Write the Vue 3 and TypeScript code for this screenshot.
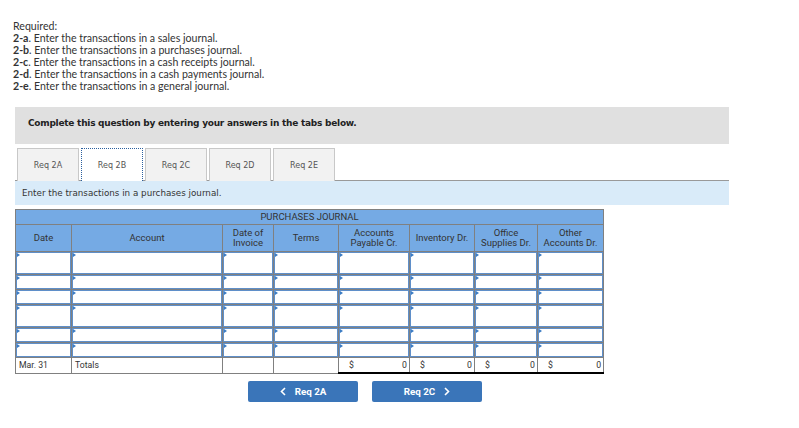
<template>
  <div class="page">
    <div class="required">
      <div>Required:</div>
      <div v-for="item in requirements" :key="item.id">
        <b>{{ item.id }}</b>. {{ item.text }}
      </div>
    </div>

    <div class="banner">Complete this question by entering your answers in the tabs below.</div>

    <div class="tabs">
      <div v-for="tab in tabs" :key="tab" class="tab" :class="{ active: tab === activeTab }">{{ tab }}</div>
    </div>

    <div class="prompt">Enter the transactions in a purchases journal.</div>

    <table class="journal">
      <colgroup>
        <col v-for="(w, i) in colWidths" :key="i" :style="{ width: w + 'px' }" />
      </colgroup>
      <thead>
        <tr><th colspan="8" class="title">PURCHASES JOURNAL</th></tr>
        <tr class="heads">
          <th v-for="h in headers" :key="h[0]">{{ h[0] }}<br v-if="h[1]" />{{ h[1] }}</th>
        </tr>
      </thead>
      <tbody>
        <tr v-for="(height, r) in rowHeights" :key="r" :style="{ height: height + 'px' }">
          <td v-for="c in 8" :key="c" class="entry"></td>
        </tr>
        <tr class="totals">
          <td>Mar. 31</td>
          <td>Totals</td>
          <td></td>
          <td></td>
          <td v-for="n in 4" :key="n" class="sum">
            <div class="money"><span>$</span><span>0</span></div>
          </td>
        </tr>
      </tbody>
    </table>

    <div class="nav">
      <button class="nav-btn">
        <svg class="chev" width="6" height="9" viewBox="0 0 6 9"><path d="M5 1 1.5 4.5 5 8" /></svg>
        Req 2A
      </button>
      <button class="nav-btn">
        Req 2C
        <svg class="chev" width="6" height="9" viewBox="0 0 6 9"><path d="M1 1 4.5 4.5 1 8" /></svg>
      </button>
    </div>
  </div>
</template>

<script setup lang="ts">
const requirements = [
  { id: "2-a", text: "Enter the transactions in a sales journal." },
  { id: "2-b", text: "Enter the transactions in a purchases journal." },
  { id: "2-c", text: "Enter the transactions in a cash receipts journal." },
  { id: "2-d", text: "Enter the transactions in a cash payments journal." },
  { id: "2-e", text: "Enter the transactions in a general journal." },
];

const tabs = ["Req 2A", "Req 2B", "Req 2C", "Req 2D", "Req 2E"];
const activeTab = "Req 2B";

const colWidths = [56, 151, 51, 65, 71, 65, 63, 66];
const rowHeights = [23, 15, 15, 23, 15, 15];

const headers: [string, string?][] = [
  ["Date"],
  ["Account"],
  ["Date of", "Invoice"],
  ["Terms"],
  ["Accounts", "Payable Cr."],
  ["Inventory Dr."],
  ["Office", "Supplies Dr."],
  ["Other", "Accounts Dr."],
];
</script>

<style>
html,
body {
  margin: 0;
  background: #fff;
}
</style>

<style scoped>
.page {
  width: 799px;
  height: 428px;
  padding: 20px 70px 0 15px;
  box-sizing: border-box;
  overflow: hidden;
  font-family: Roboto, "Liberation Sans", Arial, sans-serif;
}
.required {
  font-family: Lato, sans-serif;
  font-size: 10.6px;
  line-height: 12px;
  color: #333;
  margin-left: -2px;
}
.required b {
  font-weight: 700;
}
.banner {
  margin-top: 15px;
  height: 37px;
  line-height: 32px;
  padding-left: 13px;
  box-sizing: border-box;
  background: #e0e0e0;
  font-family: "DejaVu Sans", sans-serif;
  font-weight: bold;
  font-size: 9px;
  letter-spacing: -0.25px;
  color: #222;
}
.tabs {
  display: flex;
  gap: 2px;
  margin-top: 4px;
  padding-left: 2px;
  height: 33px;
  border-bottom: 1px solid #999;
  box-sizing: border-box;
}
.tab {
  width: 62px;
  height: 33px;
  box-sizing: border-box;
  border: 1px solid #c8c8c8;
  border-bottom: 0;
  background: #f2f2f2;
  font-family: "DejaVu Sans", sans-serif;
  font-size: 8px;
  color: #555;
  text-align: center;
  line-height: 33px;
}
.tab.active {
  background: #fff;
  border: 1px dotted #2b5f9e;
  border-bottom: 0;
}
.prompt {
  height: 24px;
  line-height: 25px;
  padding-left: 7px;
  background: #d9ebf9;
  font-family: "DejaVu Sans", sans-serif;
  font-size: 8.75px;
  color: #333;
}
.journal {
  margin-top: 4px;
  width: 588px;
  table-layout: fixed;
  border-collapse: collapse;
  font-size: 9.5px;
  color: #333;
}
.journal th,
.journal td {
  border: 1px solid #808080;
  padding: 0;
}
.journal th {
  background: #75aae4;
  font-weight: normal;
  text-align: center;
  line-height: 10px;
}
.title {
  height: 14px;
}
.heads th {
  height: 26px;
}
.entry {
  position: relative;
  background: #fff;
  box-shadow: inset 0 0 0 1px #5f8fc9;
}
.entry::before {
  content: "";
  position: absolute;
  left: 1px;
  top: 1px;
  border-left: 3px solid #3b7cc4;
  border-top: 2px solid transparent;
  border-bottom: 2px solid transparent;
}
.totals td {
  height: 14px;
  padding-left: 3px;
  font-size: 8.7px;
  line-height: 12px;
}
.totals .sum {
  border-top: 1px solid #000;
  border-bottom: 2px solid #000;
  padding: 0 2px 0 10px;
}
.money {
  display: flex;
  justify-content: space-between;
}
.nav {
  display: flex;
  gap: 14px;
  margin: 7px 0 0 233px;
}
.nav-btn {
  display: flex;
  align-items: center;
  justify-content: center;
  gap: 9px;
  width: 110px;
  height: 21px;
  border: 0;
  border-radius: 2px;
  background: #3a75b9;
  color: #fff;
  font-family: Roboto, sans-serif;
  font-weight: bold;
  font-size: 9.8px;
  padding: 0;
}
.chev path {
  fill: none;
  stroke: #fff;
  stroke-width: 1.6;
}
</style>
